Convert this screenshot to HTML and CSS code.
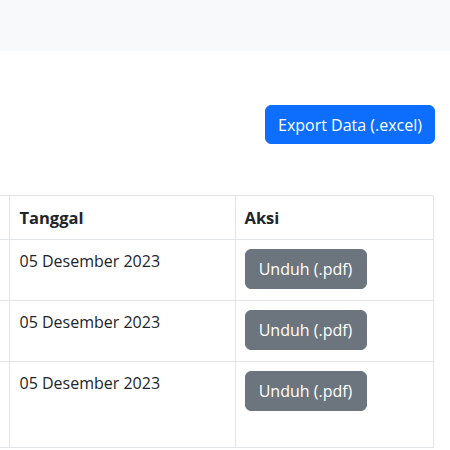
FILE: index.html
```html
<!DOCTYPE html>
<html lang="id">
<head>
<meta charset="utf-8">
<title>Data</title>
<link rel="stylesheet" href="styles.css">
</head>
<body>
<header class="topbar"></header>
<main class="content">
  <div class="actions">
    <button class="btn btn-primary">Export Data (.excel)</button>
  </div>
  <table class="data-table">
    <thead>
      <tr>
        <th class="cut"></th>
        <th class="col-date">Tanggal</th>
        <th class="col-action">Aksi</th>
      </tr>
    </thead>
    <tbody>
      <tr>
        <td class="cut"></td>
        <td>05 Desember 2023</td>
        <td class="col-action"><button class="btn btn-secondary">Unduh (.pdf)</button></td>
      </tr>
      <tr>
        <td class="cut"></td>
        <td>05 Desember 2023</td>
        <td class="col-action"><button class="btn btn-secondary">Unduh (.pdf)</button></td>
      </tr>
      <tr class="tall">
        <td class="cut"></td>
        <td>05 Desember 2023</td>
        <td class="col-action"><button class="btn btn-secondary">Unduh (.pdf)</button></td>
      </tr>
    </tbody>
  </table>
</main>
</body>
</html>
```

FILE: styles.css
```css
* { box-sizing: border-box; }
html, body { margin: 0; padding: 0; background: #fff; }
body {
  font-family: "Open Sans", "Noto Sans", "Liberation Sans", sans-serif;
  font-size: 16px;
  color: #212529;
}
.topbar {
  height: 51px;
  background: #f8f9fa;
}
.content {
  padding: 54px 15px 0 0;
}
.actions {
  display: flex;
  justify-content: flex-end;
  margin-bottom: 51px;
}
.btn {
  font-family: inherit;
  font-size: 16px;
  line-height: 1.5;
  border: 1px solid transparent;
  border-radius: 6px;
  color: #fff;
  cursor: pointer;
}
.btn-primary {
  background: #0d6efd;
  border-color: #0d6efd;
  width: 170px;
  height: 39px;
  padding: 0;
}
.btn-secondary {
  background: #6c757d;
  border-color: #6c757d;
  width: 122px;
  height: 40px;
  padding: 0;
}
.data-table {
  border-collapse: collapse;
  width: 434px;
  table-layout: fixed;
}
.data-table th,
.data-table td {
  border: 1px solid #e3e6e9;
  padding: 9px 10px;
  vertical-align: top;
  text-align: left;
  line-height: 25px;
  font-size: 16px;
}
.data-table th { font-weight: 700; font-size: 16.5px; }
.data-table td { height: 61px; }
.data-table .col-action { padding-left: 9px; }
.data-table .cut {
  width: 9px;
  padding: 0;
  border-left: none;
}
.col-date { width: 226px; }
.data-table tr.tall td { height: 86px; }
```
